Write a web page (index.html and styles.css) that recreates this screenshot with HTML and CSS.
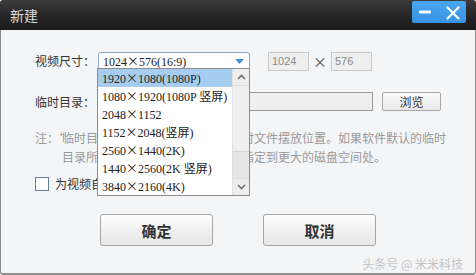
FILE: index.html
```html
<!DOCTYPE html>
<html lang="zh-CN">
<head>
<meta charset="utf-8">
<title>新建</title>
<link rel="stylesheet" href="styles.css">
</head>
<body>
<div class="window">
  <div class="titlebar">
    <span class="title">新建</span>
    <div class="winbtns">
      <svg class="ico-min" width="12" height="4" viewBox="0 0 12 4"><rect x="0" y="0.5" width="12" height="3" rx="1.2" fill="#fff"/></svg>
      <svg class="ico-close" width="14" height="14" viewBox="0 0 14 14"><path d="M1.5 1.5 L12.5 12.5 M12.5 1.5 L1.5 12.5" stroke="#fff" stroke-width="2.2" stroke-linecap="round"/></svg>
    </div>
  </div>
  <div class="content">
    <div class="row row-size">
      <span class="label">视频尺寸：</span>
      <div class="select">
        <span class="sel-text">1024<span class="x">×</span>576(16:9)</span>
        <svg class="sel-arrow" width="9" height="5" viewBox="0 0 9 5"><path d="M0 0 H9 L4.5 5 Z" fill="#4a8fd0"/></svg>
      </div>
      <div class="numbox">1024</div>
      <span class="times">×</span>
      <div class="numbox">576</div>
    </div>
    <div class="row row-dir">
      <span class="label">临时目录：</span>
      <div class="pathbox"></div>
      <button class="browse">浏览</button>
    </div>
    <div class="note">
      <span class="note-head">注：</span>
      <p class="note-body"><span class="q">“</span>临时目录”是软件处理时产生的临时文件摆放位置。如果软件默认的临时<br>目录所在磁盘空间不足，请您将其指定到更大的磁盘空间处。</p>
    </div>
    <div class="row row-check">
      <span class="checkbox"></span>
      <span class="check-label">为视频自动添加片头</span>
    </div>
    <div class="actions">
      <button class="btn">确定</button>
      <button class="btn">取消</button>
    </div>
    <div class="watermark">头条号 @ 米米科技</div>

    <div class="dropdown">
      <ul class="options">
        <li class="opt active">1920<span class="x">×</span>1080(1080P)</li>
        <li class="opt">1080<span class="x">×</span>1920(1080P 竖屏)</li>
        <li class="opt">2048<span class="x">×</span>1152</li>
        <li class="opt">1152<span class="x">×</span>2048(竖屏)</li>
        <li class="opt">2560<span class="x">×</span>1440(2K)</li>
        <li class="opt">1440<span class="x">×</span>2560(2K 竖屏)</li>
        <li class="opt">3840<span class="x">×</span>2160(4K)</li>
      </ul>
      <div class="scrollbar">
        <div class="sb-btn"><svg width="9" height="6" viewBox="0 0 9 6"><path d="M1 5 L4.5 1.5 L8 5" stroke="#707070" stroke-width="1.6" fill="none"/></svg></div>
        <div class="sb-track"><div class="sb-thumb"></div></div>
        <div class="sb-btn"><svg width="9" height="6" viewBox="0 0 9 6"><path d="M1 1 L4.5 4.5 L8 1" stroke="#707070" stroke-width="1.6" fill="none"/></svg></div>
      </div>
    </div>
  </div>
</div>
</body>
</html>
```

FILE: styles.css
```css
* { box-sizing: border-box; }
html, body { margin: 0; padding: 0; }
body {
  width: 476px;
  height: 275px;
  overflow: hidden;
  background: #ffffff;
  font-family: "Noto Sans CJK SC", "Liberation Sans", sans-serif;
  font-size: 12px;
  color: #333;
}
.window {
  width: 476px;
  height: 275px;
  display: flex;
  flex-direction: column;
}
.titlebar {
  height: 30px;
  flex: none;
  background: linear-gradient(#3b3b3b, #232323 60%, #1c1c1c);
  border-radius: 3px 3px 0 0;
  display: flex;
  align-items: flex-start;
  justify-content: space-between;
  padding: 0 10px 0 10px;
}
.title {
  color: #dcdcdc;
  font-size: 14px;
  line-height: 30px;
}
.winbtns {
  margin-top: 1px;
  width: 54px;
  height: 22px;
  background: linear-gradient(#4aa6f0, #3793e4);
  border-radius: 2px;
  display: flex;
  align-items: center;
  padding-left: 7px;
  gap: 15px;
}
.ico-close { margin-top: 1px; }
.content {
  position: relative;
  flex: 1;
  background: #f4f5f7;
  border-left: 1px solid #8a8a8a;
  border-right: 1px solid #8a8a8a;
  border-bottom: 2px solid #8f8f8f;
  border-radius: 0 0 3px 3px;
  padding: 21px 0 0 34px;
}
.row { display: flex; align-items: center; }
.label {
  width: 63px;
  color: #333;
  font-size: 12px;
  line-height: 18px;
}
.select {
  width: 152px;
  height: 18px;
  border: 1px solid #86a6cc;
  border-radius: 3px;
  background: #fff;
  display: flex;
  align-items: center;
  justify-content: space-between;
  padding: 0 5px 0 4px;
}
.sel-text, .opt {
  font-family: "Liberation Serif", "Noto Sans CJK SC", serif;
  font-size: 12px;
  color: #222;
  white-space: nowrap;
}
.x {
  display: inline-block;
  width: 12px;
  text-align: center;
  font-family: "Noto Sans CJK SC", sans-serif;
  font-size: 12px;
}
.numbox {
  width: 41px;
  height: 19px;
  border: 1px solid #c9c9c9;
  background: #efefef;
  color: #8a8a8a;
  font-family: "Liberation Sans", sans-serif;
  font-size: 11px;
  line-height: 17px;
  padding-left: 3px;
}
.select + .numbox { margin-left: 18px; }
.times {
  width: 22px;
  text-align: center;
  color: #555;
  font-size: 14px;
}
.row-dir { margin-top: 21px; }
.pathbox {
  width: 275px;
  height: 19px;
  border: 1px solid #9a9a9a;
  background: #efefef;
}
.browse {
  margin-left: 9px;
  width: 59px;
  height: 19px;
  border: 1px solid #a8a8a8;
  border-radius: 2px;
  background: linear-gradient(#fbfbfb, #e9e9e9);
  font-family: "Noto Sans CJK SC", sans-serif;
  font-size: 12px;
  color: #333;
  padding: 0;
  line-height: 17px;
}
.note {
  display: flex;
  margin-top: 17px;
  color: #9a9a9a;
  font-size: 12px;
  line-height: 19px;
}
.note-head { width: 27px; flex: none; }
.note-body { margin: 0; white-space: nowrap; }
.q { margin-left: -9px; display: inline-block; width: 9px; }
.row-check { margin-top: 9px; }
.checkbox {
  width: 14px;
  height: 14px;
  border: 1px solid #5c7f9a;
  background: #fff;
  flex: none;
}
.check-label { margin-left: 6px; color: #333; font-size: 12px; }
.actions {
  display: flex;
  margin-top: 22px;
  padding-left: 65px;
  gap: 50px;
}
.btn {
  width: 113px;
  height: 32px;
  border: 1px solid #a4a4a4;
  border-radius: 3px;
  background: linear-gradient(#ffffff, #f1f1f1 50%, #e6e6e6);
  font-family: "Noto Sans CJK SC", sans-serif;
  font-weight: bold;
  font-size: 15px;
  color: #333;
  padding: 0;
}
.watermark {
  position: absolute;
  right: 12px;
  bottom: 1px;
  color: #c4c4c4;
  font-size: 12px;
}
.dropdown {
  position: absolute;
  left: 96px;
  top: 38px;
  width: 153px;
  height: 128px;
  border: 1px solid #8c8c8c;
  background: #fff;
  display: flex;
}
.options {
  list-style: none;
  margin: 0;
  padding: 0;
  flex: 1;
}
.opt {
  height: 18px;
  line-height: 18px;
  padding-left: 4px;
}
.opt.active { background: #a6cdf0; }
.scrollbar {
  width: 17px;
  flex: none;
  background: #eaeaea;
  border-left: 1px solid #e0e0e0;
  display: flex;
  flex-direction: column;
}
.sb-btn {
  height: 17px;
  display: flex;
  align-items: center;
  justify-content: center;
  background: #ededed;
  border-bottom: 1px solid #dcdcdc;
}
.sb-btn:last-child { border-bottom: none; border-top: 1px solid #dcdcdc; }
.sb-track { flex: 1; background: #e6e6e6; }
.sb-thumb { height: 66px; background: #efefef; border-bottom: 1px solid #d4d4d4; }
```
